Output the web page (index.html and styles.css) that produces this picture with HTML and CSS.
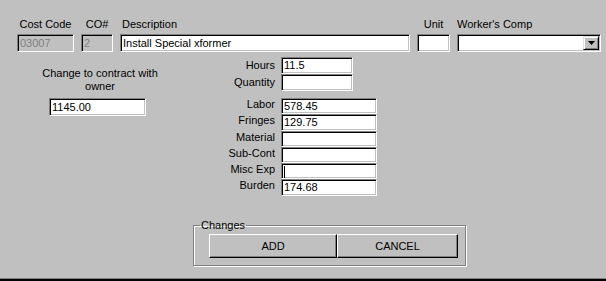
FILE: index.html
```html
<!DOCTYPE html>
<html>
<head>
<meta charset="utf-8">
<title>Change Order</title>
<link rel="stylesheet" href="styles.css">
</head>
<body>
<div class="window">
  <div class="top-row">
    <div class="col">
      <div class="lbl-center">Cost Code</div>
      <div class="edit disabled">03007</div>
    </div>
    <div class="col">
      <div class="lbl-center">CO#</div>
      <div class="edit disabled">2</div>
    </div>
    <div class="col">
      <div class="lbl-left">Description</div>
      <div class="edit">Install Special xformer</div>
    </div>
    <div class="col">
      <div class="lbl-center">Unit</div>
      <div class="edit"></div>
    </div>
    <div class="col">
      <div>Worker's Comp</div>
      <div class="edit combo">
        <div class="drop">
          <svg width="7" height="4" viewBox="0 0 7 4"><polygon points="0,0 7,0 3.5,4" fill="#000"/></svg>
        </div>
      </div>
    </div>
  </div>

  <div class="main">
    <div class="owner">
      <div>Change to contract with<br>owner</div>
      <div class="edit">1145.00</div>
    </div>
    <div class="amounts">
      <div class="grid hq">
        <div class="lbl">Hours</div>
        <div class="edit">11.5</div>
        <div class="lbl">Quantity</div>
        <div class="edit"></div>
      </div>
      <div class="grid costs">
        <div class="lbl">Labor</div>
        <div class="edit">578.45</div>
        <div class="lbl">Fringes</div>
        <div class="edit tall">129.75</div>
        <div class="lbl">Material</div>
        <div class="edit"></div>
        <div class="lbl">Sub-Cont</div>
        <div class="edit"></div>
        <div class="lbl">Misc Exp</div>
        <div class="edit"><span class="caret"></span></div>
        <div class="lbl">Burden</div>
        <div class="edit tall">174.68</div>
      </div>
    </div>
  </div>

  <fieldset class="changes">
    <legend>Changes</legend>
    <div class="buttons">
      <div class="btn add">ADD</div>
      <div class="btn cancel">CANCEL</div>
    </div>
  </fieldset>
</div>
</body>
</html>
```

FILE: styles.css
```css
* { box-sizing: border-box; }

body {
  margin: 0;
  background: #c0c0c0;
  font: 11px/13px "Liberation Sans", Arial, sans-serif;
  color: #000;
}

.window {
  height: 281px;
  border-bottom: 2px solid #000;
  box-shadow: inset 0 -1px #808080;
  overflow: hidden;
}

.top-row {
  display: grid;
  grid-template-columns: 57px 32px 290px 33px 144px;
  column-gap: 7px;
  padding: 18px 0 0 17px;
}

.col {
  display: flex;
  flex-direction: column;
  gap: 3px;
}

.lbl-center { text-align: center; }
.lbl-left { padding-left: 2px; }

.edit {
  height: 18px;
  background: #fff;
  border: 1px solid;
  border-color: #808080 #fff #fff #808080;
  box-shadow: inset 1px 1px #000, inset -1px -1px #c0c0c0;
  padding: 0 2px;
  line-height: 16px;
  white-space: nowrap;
  overflow: hidden;
}

.edit.disabled {
  background: #c0c0c0;
  color: #808080;
}

.edit.combo {
  display: flex;
  justify-content: flex-end;
  padding: 1px;
}

.drop {
  width: 16px;
  height: 14px;
  background: #c0c0c0;
  border: 1px solid;
  border-color: #dfdfdf #000 #000 #dfdfdf;
  box-shadow: inset 1px 1px #fff, inset -1px -1px #808080;
  display: flex;
  align-items: center;
  justify-content: center;
}

.drop svg { display: block; }

.main {
  display: flex;
  align-items: flex-start;
  margin-top: 5px;
  padding-left: 40px;
}

.owner {
  width: 120px;
  text-align: center;
  padding-top: 10px;
}

.owner .edit {
  width: 97px;
  margin: 5px 0 0 9px;
  text-align: left;
}

.amounts { margin-left: 55px; }

.grid {
  display: grid;
  column-gap: 6px;
}

.grid.hq { grid-template-columns: 60px 72px; }
.grid.costs { grid-template-columns: 60px 96px; margin-top: 7px; }

.grid .lbl {
  text-align: right;
  align-self: center;
}

.grid.costs .lbl { align-self: start; }

.grid .edit {
  height: 17px;
  line-height: 15px;
}

.grid.costs .edit {
  height: 16px;
  line-height: 14px;
}

.grid.costs .edit.tall {
  height: 17px;
  line-height: 15px;
}

.caret {
  display: inline-block;
  width: 1px;
  height: 12px;
  background: #000;
  vertical-align: middle;
}

.changes {
  margin: 23px 0 0 193px;
  width: 273px;
  min-width: 0;
  padding: 0;
  border: 1px solid #808080;
  box-shadow: inset 1px 1px #fff, 1px 1px #fff;
}

.changes legend {
  margin-left: 6px;
  padding: 0 1px;
  line-height: 13px;
}

.buttons {
  display: flex;
  padding: 2px 7px 7px 15px;
}

.btn {
  height: 24px;
  border: 1px solid;
  border-color: #fff #000 #000 #fff;
  box-shadow: inset -1px -1px #808080;
  display: flex;
  align-items: center;
  justify-content: center;
}

.btn.add { width: 128px; }
.btn.cancel { width: 121px; }
```
